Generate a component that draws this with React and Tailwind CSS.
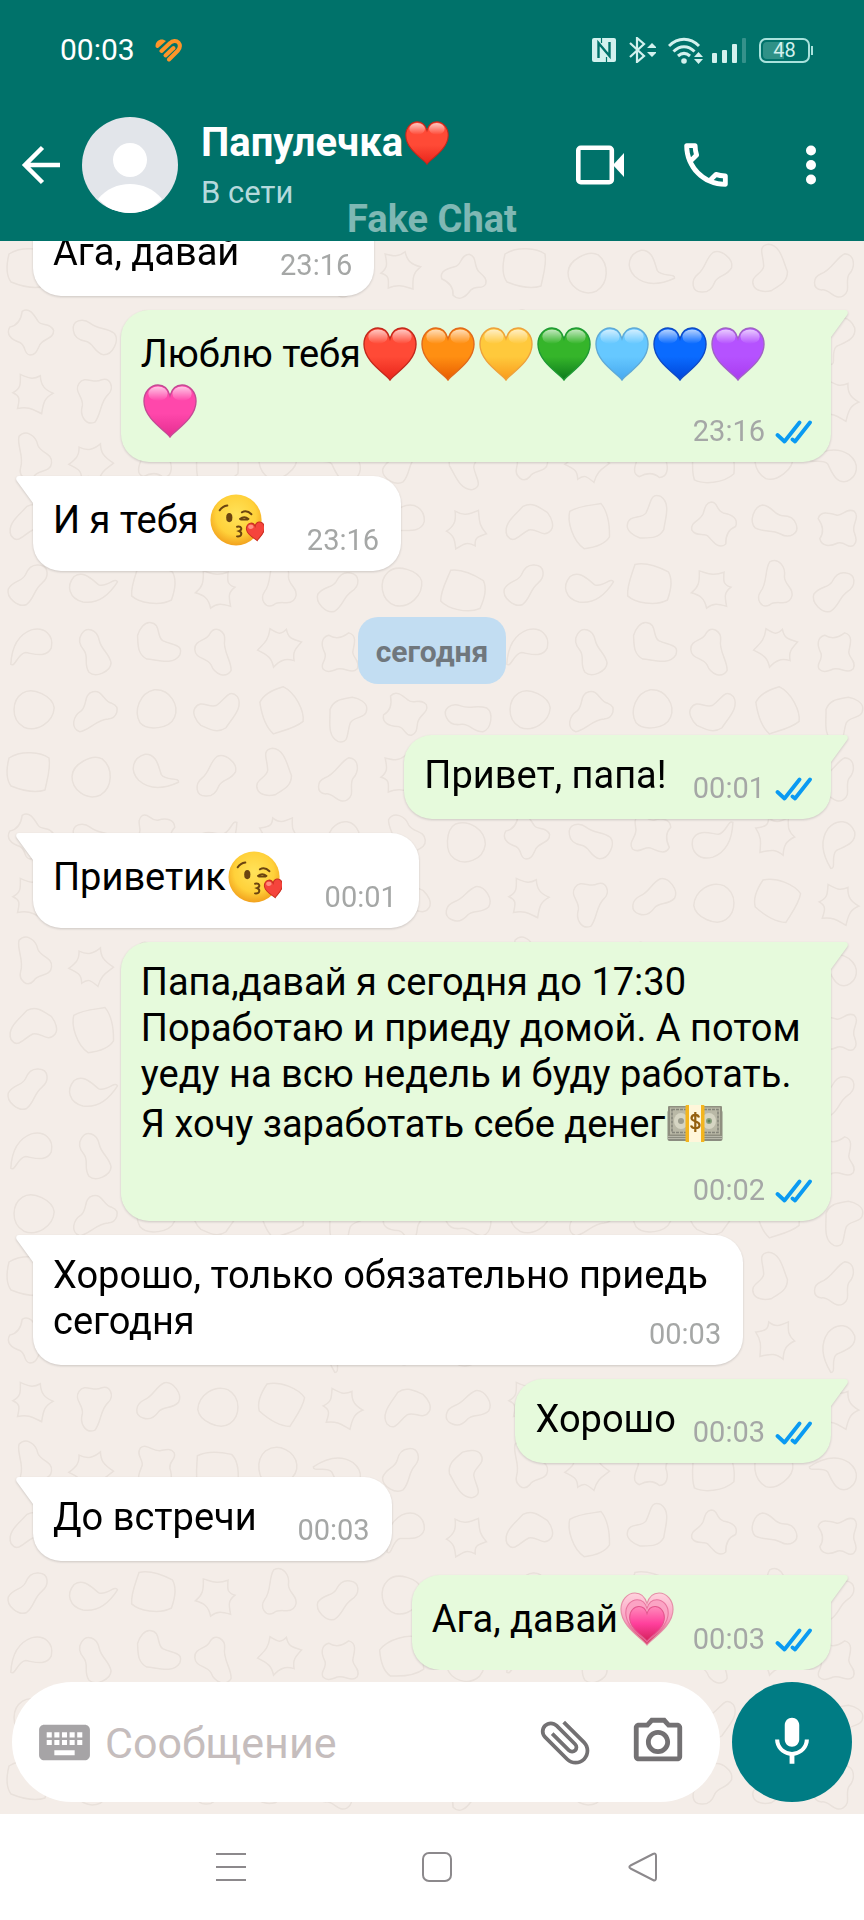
import React from "react";
import clsx from "clsx";
import {
  MdAttachFile,
  MdKeyboard,
  MdMic,
  MdOutlineCameraAlt,
  MdOutlinePhone,
} from "react-icons/md";

const HEART =
  "M27 54C22 47 0 35 0 17C0 7 7 0 14.5 0C20.5 0 25 4 27 11C29 4 33.5 0 39.5 0C47 0 54 7 54 17C54 35 32 47 27 54Z";

const hearts = {
  red: ["#ff4a36", "#e8241a", "#c2281c"],
  orange: ["#ff8f12", "#e85c00", "#e0691a"],
  yellow: ["#ffc93c", "#f99a1c", "#eda13c"],
  green: ["#35b52a", "#0c7a1c", "#1f9a35"],
  sky: ["#66c8ff", "#46a8ef", "#5fa9d6"],
  blue: ["#0a6bff", "#0045d8", "#0f4ac4"],
  purple: ["#b552ff", "#a93bef", "#a063c4"],
  pink: ["#ff47ab", "#e42d90", "#c44a94"],
};

const Heart = ({ color, className }) => {
  const [main, dark, edge] = hearts[color];
  return (
    <svg viewBox="-1 -1 56 56" className={className} role="img" aria-label={color}>
      <defs>
        <linearGradient id={`fill-${color}`} x1="0" y1="0" x2="0" y2="1">
          <stop offset="0.55" stopColor={main} />
          <stop offset="1" stopColor={dark} />
        </linearGradient>
        <linearGradient id={`gloss-${color}`} x1="0" y1="0" x2="0" y2="1">
          <stop offset="0" stopColor="#fff" stopOpacity="0.7" />
          <stop offset="1" stopColor="#fff" stopOpacity="0" />
        </linearGradient>
      </defs>
      <path d={HEART} fill={`url(#fill-${color})`} />
      <ellipse cx="14.5" cy="9" rx="10" ry="7.5" fill={`url(#gloss-${color})`} />
      <ellipse cx="39.5" cy="9" rx="10" ry="7.5" fill={`url(#gloss-${color})`} />
      <path d={HEART} fill="none" stroke={edge} strokeWidth="1.4" />
    </svg>
  );
};

const GrowingHeart = ({ className }) => (
  <svg viewBox="-1 -1 56 56" className={className} role="img" aria-label="growing heart">
    <defs>
      <linearGradient id="grow" x1="0" y1="0" x2="0" y2="1">
        <stop offset="0" stopColor="#ffd3dd" />
        <stop offset="0.55" stopColor="#f99bc0" />
        <stop offset="1" stopColor="#d11f4c" />
      </linearGradient>
      <linearGradient id="growInner" x1="0" y1="0" x2="0" y2="1">
        <stop offset="0" stopColor="#ff8cbb" />
        <stop offset="0.5" stopColor="#ff3f9c" />
        <stop offset="1" stopColor="#d3215a" />
      </linearGradient>
    </defs>
    <path d={HEART} fill="url(#grow)" stroke="#e58fa8" strokeWidth="1.2" />
    <path d={HEART} fill="#fba4c4" stroke="#e8769f" strokeWidth="1.4" transform="translate(5 7) scale(.815)" />
    <path d={HEART} fill="url(#growInner)" stroke="#e2558c" strokeWidth="1.6" transform="translate(9 14) scale(.667)" />
  </svg>
);

const KissFace = ({ className }) => (
  <svg viewBox="0 0 56 56" className={className} role="img" aria-label="kiss">
    <defs>
      <radialGradient id="face" cx="0.5" cy="0.4" r="0.6">
        <stop offset="0" stopColor="#ffe35a" />
        <stop offset="0.65" stopColor="#ffd13a" />
        <stop offset="1" stopColor="#f2a11d" />
      </radialGradient>
    </defs>
    <circle cx="27" cy="28" r="26.5" fill="url(#face)" />
    <g fill="none" stroke="#6b4410" strokeLinecap="round">
      <path d="M10 18C12 15 14.5 13.5 18 13" strokeWidth="2" />
      <path d="M33 20C37 18 40 19 43 22" strokeWidth="2" />
      <path d="M31 27C34 24.5 37 24.5 40 27M32 27.5H39" strokeWidth="1.8" />
      <path d="M28 35C33 34 34 38 30 39.5C34 41 33 45.5 28 45" strokeWidth="2" />
    </g>
    <ellipse cx="20" cy="25.5" rx="3.2" ry="4.8" fill="#6b4410" />
    <g transform="translate(37 32) rotate(-8) scale(.35)">
      <path d={HEART} fill="#f5443c" stroke="#c92d20" strokeWidth="3" />
      <ellipse cx="14" cy="11" rx="8" ry="6" fill="#ff8f80" />
    </g>
  </svg>
);

const Money = ({ className }) => (
  <svg viewBox="0 0 56 56" className={className} role="img" aria-label="money">
    <rect x="0.5" y="13" width="55" height="31" rx="2" fill="#8b8c80" />
    <path d="M1 41.5H55M1 39.5H55" stroke="#c3c3b4" strokeWidth="0.8" />
    <rect x="1" y="9" width="54" height="30" rx="1" fill="#8f8f80" />
    <rect x="3" y="10.5" width="50" height="27" fill="#b9b8a6" />
    <rect x="5" y="12.5" width="46" height="23" fill="none" stroke="#85857a" strokeWidth="1.6" strokeDasharray="3 1" />
    <ellipse cx="14" cy="24" rx="7" ry="8" fill="#d6d5c3" />
    <ellipse cx="42" cy="24" rx="7" ry="8" fill="#d6d5c3" />
    <circle cx="14" cy="24" r="3" fill="#9b9c8d" />
    <circle cx="42" cy="24" r="3" fill="#8ba07f" />
    <circle cx="42" cy="24" r="1.5" fill="#5d7f58" />
    <rect x="18.5" y="8" width="19" height="37" rx="1" fill="#f3b51e" />
    <rect x="22" y="8" width="12" height="37" fill="#fff6da" />
    <path
      d="M32 20.5C31 17 25 17 24.5 21C24 25 32.5 23.5 32.5 28C32.5 32.5 25 32 24 28.5M28.3 15V35"
      fill="none"
      stroke="#94600f"
      strokeWidth="2.2"
    />
  </svg>
);

const Emoji = ({ name }) => {
  const size = "h-[54px] w-[54px]";
  return (
    <span className="inline-block h-[57px] w-[58px] px-[2px] align-[-17px]">
      {name === "kiss" && <KissFace className={size} />}
      {name === "money" && <Money className="h-[56px] w-[56px] max-w-none" />}
      {name === "growing" && <GrowingHeart className={size} />}
      {hearts[name] && <Heart color={name} className={size} />}
    </span>
  );
};

// faint doodles behind the conversation
const blobs = [
  "M-20-14C-8-22 12-20 20-14C22-4 18 8 16 18C4 22-8 18-18 14C-24 6-22-6-20-14Z",
  "M-4-20C4-26 12-18 10-8C8 2 14 8 12 18C8 26-8 26-12 18C-14 8-6 4-8-4C-10-10-10-16-4-20Z",
  "M0-20C4-12 8-10 20-8C16 0 12 4 14 16C6 14 2 12-2 20C-6 12-10 12-20 12C-16 4-14 0-18-8C-8-8-4-12 0-20Z",
  "M-14-16C-2-24 16-18 20-4C22 12 6 22-6 18C-18 14-22-8-14-16Z",
  "M-22-12C-14-20-8-8 0-10C10-14 16-24 22-14C26-2 12 6 4 14C-6 18-12 12-20 6C-24 0-26-8-22-12Z",
  "M-16-18C-10-22-8-14 0-16C8-20 16-20 18-12C14-6 14 0 20 8C18 16 10 14 2 12C-4 10-8 20-16 16C-22 10-14 4-16-4C-18-10-20-14-16-18Z",
  "M-16-22C-4-20 12-14 16 2C18 16 8 24-4 20C-14 14-8 2-6-6C-6-14-20-18-16-22Z",
  "M8-22C18-22 20-10 14-2C10 6 18 14 10 20C2 26-4 14-12 16C-22 16-22 4-14 0C-4-4 0-18 8-22Z",
];

const Wallpaper = () => (
  <svg className="absolute inset-0 h-full w-full" aria-hidden="true">
    <defs>
      <pattern id="doodles" width="496" height="504" patternUnits="userSpaceOnUse">
        {Array.from({ length: 64 }, (_, n) => {
          const col = n % 8;
          const row = Math.floor(n / 8);
          const x = col * 62 + 31 + ((row * 7) % 5) - 2;
          const y = row * 63 + 31 + ((col * 5) % 9) - 4;
          return (
            <path
              key={n}
              d={blobs[(col * 3 + row * 5 + ((col * row) % 3)) % 8]}
              transform={`translate(${x} ${y}) rotate(${(n * 73) % 360})`}
              fill="none"
              stroke="#e9e1db"
              strokeWidth="1.5"
            />
          );
        })}
      </pattern>
    </defs>
    <rect width="100%" height="100%" fill="url(#doodles)" />
  </svg>
);

const Checks = () => (
  <svg viewBox="0 0 37 24" className="h-[24px] w-[37px]" fill="none" stroke="#0a9af2" strokeWidth="3.8" strokeLinecap="round" strokeLinejoin="round" role="img" aria-label="Прочитано">
    <path d="M2.5 15L9.5 21.5L24.5 2.5" />
    <path d="M17.5 19.5L20 21.5L35 2.5" />
  </svg>
);

const messages = [
  { text: "Ага, давай", time: "23:16" },
  {
    mine: true,
    text: "Люблю тебя",
    emoji: ["red", "orange", "yellow", "green", "sky", "blue", "purple", "pink"],
    time: "23:16",
  },
  { text: "И я тебя ", emoji: ["kiss"], time: "23:16" },
  { day: "сегодня" },
  { mine: true, text: "Привет, папа!\u00a0", time: "00:01" },
  { text: "Приветик", emoji: ["kiss"], time: "00:01" },
  {
    mine: true,
    text: "Папа,давай я сегодня до 17:30 Поработаю и приеду домой. А потом уеду на всю недель и буду работать. Я хочу заработать себе денег",
    emoji: ["money"],
    time: "00:02",
  },
  { text: "Хорошо, только обязательно приедь сегодня", time: "00:03" },
  { mine: true, text: "Хорошо", time: "00:03" },
  { text: "До встречи", time: "00:03" },
  { mine: true, text: "Ага, давай", emoji: ["growing"], time: "00:03" },
];

const Bubble = ({ mine, text, emoji = [], time }) => (
  <li
    className={clsx(
      "relative grid max-w-[89%] shrink-0 rounded-[28px] pr-[19px] pl-[20px] drop-shadow-[0_1px_1px_rgba(0,0,0,0.16)]",
      mine ? "self-end rounded-tr-none bg-[#e6fadc]" : "self-start rounded-tl-none bg-white"
    )}
  >
    <svg
      viewBox="0 0 18 28"
      className={clsx(
        "absolute top-0 h-[28px] w-[18px]",
        mine ? "left-full -ml-px text-[#e6fadc]" : "right-full -mr-px -scale-x-100 text-white"
      )}
      fill="currentColor"
      aria-hidden="true"
    >
      <path d="M0 0H15C18 0 18.5 3 17 5L1 27V28H0Z" />
    </svg>
    <p className="col-start-1 row-start-1 pt-[17px] pb-[21px] text-[38px] leading-[46px] text-black">
      {text}
      {emoji.map((name) => (
        <Emoji key={name} name={name} />
      ))}
      {/* keeps the last line clear of the time */}
      <span className={clsx("inline-block h-px", mine ? "w-[136px]" : "w-[116px]")} />
    </p>
    <div
      className={clsx(
        "col-start-1 row-start-1 flex items-center gap-[10px] self-end justify-self-end pb-[14px]",
        !mine && "pr-[3px]"
      )}
    >
      <time className="text-[29px] leading-[33px] text-[#a5a7a6]">{time}</time>
      {mine && <Checks />}
    </div>
  </li>
);

const StatusIcons = () => (
  <div className="flex items-center text-[#d3f1ee]">
    <svg viewBox="0 0 24 26" className="mr-[13px] h-[26px] w-[24px]" fill="none" aria-label="NFC">
      <rect y="1" width="24" height="24" rx="2" fill="#d3f1ee" />
      <path d="M6.5 21V6L17.5 19V5" stroke="#00726a" strokeWidth="2.4" />
      <path d="M9.5 1V6M14.5 25V20" stroke="#00726a" strokeWidth="1.2" />
    </svg>
    <svg viewBox="0 0 27 26" className="mr-[12px] h-[26px] w-[27px]" fill="none" stroke="currentColor" strokeWidth="2.2" aria-label="Bluetooth">
      <path d="M1 6L15 19L8 25V1L15 7L1 20" />
      <path d="M18 11L23 6L28 11ZM18 15L23 20L28 15Z" fill="currentColor" stroke="none" />
    </svg>
    <svg viewBox="0 0 35 27" className="mr-[9px] h-[27px] w-[35px]" fill="none" stroke="currentColor" strokeWidth="3" aria-label="Wi-Fi">
      <path d="M1 9C10 0 22 0 31 9M5.5 14.5C12 8 20 8 26.5 14.5M10 19C14 15.5 18 15.5 22 19" />
      <circle cx="16" cy="24" r="2.8" fill="currentColor" stroke="none" />
      <path d="M26 20L30.5 15L35 20ZM26 22L30.5 27L35 22Z" fill="currentColor" stroke="none" />
    </svg>
    <svg viewBox="0 0 35 26" className="mr-[12px] h-[26px] w-[35px]" fill="currentColor" aria-label="Сигнал">
      <rect x="0" y="16" width="5" height="10" rx="1" />
      <rect x="10" y="13" width="5" height="13" rx="1" />
      <rect x="20" y="7" width="5" height="19" rx="1" />
      <rect x="30" y="1" width="4" height="25" rx="1" opacity="0.25" />
    </svg>
    <div className="flex h-[25px] w-[51px] items-center rounded-[7px] border-2 border-[#a9e2dc] p-[2px]">
      <div className="flex h-full w-full items-center justify-center rounded-[4px] bg-linear-to-r from-[#2f9187] from-50% to-transparent to-50% text-[20px] leading-[20px]">
        48
      </div>
    </div>
    <div className="ml-px h-[9px] w-[2px] bg-[#a9e2dc]" />
  </div>
);

const Header = () => (
  <header className="relative shrink-0 bg-[#00726a] pb-[11px] text-white">
    <div className="flex h-[100px] items-center justify-between pr-[51px] pl-[60px]">
      <div className="flex items-center gap-[20px]">
        <span className="text-[30px] leading-[36px]">00:03</span>
        <svg viewBox="0 0 27 24" className="h-[24px] w-[27px]" fill="none" stroke="#ff9529" strokeWidth="4" strokeLinecap="round" strokeLinejoin="round" aria-hidden="true">
          <path d="M0.5 8C0.5 2 7 -0.5 11 3L3 10C1.500 10 0.500 9.500 0.5 8Z" fill="#ff9529" stroke="none" />
          <path d="M6.500 13L15 5C17.500 2.300 21.500 2.300 23.500 4.500C25.500 7 25 10 23 12.500L14 21.500" />
          <path d="M10.500 17.500L18.500 10" />
        </svg>
      </div>
      <StatusIcons />
    </div>
    <div className="flex h-[130px] items-center pr-[43px] pl-[20px]">
      <button type="button" aria-label="Назад">
        <svg viewBox="0 0 42 42" className="h-[42px] w-[42px]" fill="none" stroke="currentColor" strokeWidth="4.5" aria-hidden="true">
          <path d="M40 21H5M22.5 3.5L5 21L22.5 38.5" />
        </svg>
      </button>
      <svg viewBox="0 0 96 96" className="ml-[20px] h-[96px] w-[96px] shrink-0 rounded-full" role="img" aria-label="Папулечка">
        <rect width="96" height="96" fill="#e2e5ea" />
        <circle cx="48" cy="43" r="17" fill="#fff" />
        <path d="M16 82C32 62 64 62 80 82L64 96H32Z" fill="#fff" />
      </svg>
      <div className="ml-[23px] min-w-0 flex-1">
        <h1 className="mb-[4px] flex items-center text-[40px] leading-[52px] font-bold">
          Папулечка
          <Heart color="red" className="ml-[2px] h-[44px] w-[44px]" />
        </h1>
        <p className="text-[31px] leading-[40px] text-[#b5d9dc]">В сети</p>
      </div>
      <button type="button" aria-label="Видеозвонок">
        <svg viewBox="0 0 48 40" className="h-[40px] w-[48px]" fill="none" aria-hidden="true">
          <rect x="2.3" y="2.8" width="33.5" height="34.4" rx="2.5" stroke="currentColor" strokeWidth="4.6" />
          <path d="M37 20L48 8V32Z" fill="currentColor" />
        </svg>
      </button>
      <button type="button" className="ml-[53px]" aria-label="Позвонить">
        <MdOutlinePhone size={58} />
      </button>
      <button type="button" className="ml-[66px]" aria-label="Меню">
        <svg viewBox="0 0 20 40" className="h-[40px] w-[20px]" fill="currentColor" aria-hidden="true">
          <circle cx="10" cy="5.5" r="5" />
          <circle cx="10" cy="20" r="5" />
          <circle cx="10" cy="34.5" r="5" />
        </svg>
      </button>
    </div>
    <p className="absolute inset-x-0 bottom-0 text-center text-[38px] leading-[44px] font-bold text-white/50">
      Fake Chat
    </p>
  </header>
);

const Composer = () => (
  <form className="flex shrink-0 gap-[12px] p-[12px]">
    <div className="flex h-[120px] min-w-0 flex-1 items-center rounded-full bg-white pr-[33px] pl-[22px]">
      <button type="button" className="text-[#a6a4a6]" aria-label="Клавиатура">
        <MdKeyboard size={61} />
      </button>
      <input
        type="text"
        aria-label="Сообщение"
        placeholder="Сообщение"
        className="ml-[10px] min-w-0 flex-1 pt-[2px] text-[43px] text-black outline-none placeholder:text-[#c5bdbd]"
      />
      <button type="button" className="text-[#737173]" aria-label="Прикрепить файл">
        <MdAttachFile size={60} className="-rotate-45" />
      </button>
      <button type="button" className="ml-[34px] text-[#737173]" aria-label="Камера">
        <MdOutlineCameraAlt size={58} />
      </button>
    </div>
    <button
      type="button"
      className="flex h-[120px] w-[120px] shrink-0 items-center justify-center rounded-full bg-[#007c84] text-white"
      aria-label="Голосовое сообщение"
    >
      <MdMic size={58} />
    </button>
  </form>
);

const NavBar = () => (
  <nav className="flex h-[106px] shrink-0 items-center justify-center gap-[176px] bg-white pl-[10px] text-[#8c898c]">
    <button type="button" aria-label="Недавние">
      <svg viewBox="0 0 30 30" className="h-[30px] w-[30px]" stroke="currentColor" strokeWidth="2" aria-hidden="true">
        <path d="M0 2H30M0 15H30M0 28H30" />
      </svg>
    </button>
    <button type="button" aria-label="Домой">
      <svg viewBox="0 0 30 30" className="h-[30px] w-[30px]" fill="none" stroke="currentColor" strokeWidth="2" aria-hidden="true">
        <rect x="1" y="1" width="28" height="28" rx="6" />
      </svg>
    </button>
    <button type="button" aria-label="Назад">
      <svg viewBox="0 0 30 30" className="h-[30px] w-[30px]" fill="none" stroke="currentColor" strokeWidth="2" strokeLinejoin="round" aria-hidden="true">
        <path d="M2.5 13.5L25 2C27 1 28 2 28 4V26C28 28 27 29 25 28L2.5 16.5C1 15.5 1 14.5 2.5 13.5Z" />
      </svg>
    </button>
  </nav>
);

const App = () => {
  return (
    <div className="flex h-screen flex-col bg-[#f4ede8] font-[Roboto,'Noto_Sans',sans-serif]">
      <Header />
      <main className="relative flex min-h-0 flex-1 flex-col">
        <Wallpaper />
        <ul className="relative flex min-h-0 flex-1 flex-col justify-end gap-[14px] overflow-hidden px-[33px]">
          {messages.map((m, i) =>
            m.day ? (
              <li
                key={i}
                className="mt-[32px] mb-[37px] shrink-0 self-center rounded-[20px] bg-[#c2ddf2] px-[18px] pt-[18px] pb-[15px] text-[30px] leading-[34px] font-bold text-[#70777d]"
              >
                {m.day}
              </li>
            ) : (
              <Bubble key={i} {...m} />
            )
          )}
        </ul>
        <div className="relative">
          <Composer />
        </div>
      </main>
      <NavBar />
    </div>
  );
};

export default App;
